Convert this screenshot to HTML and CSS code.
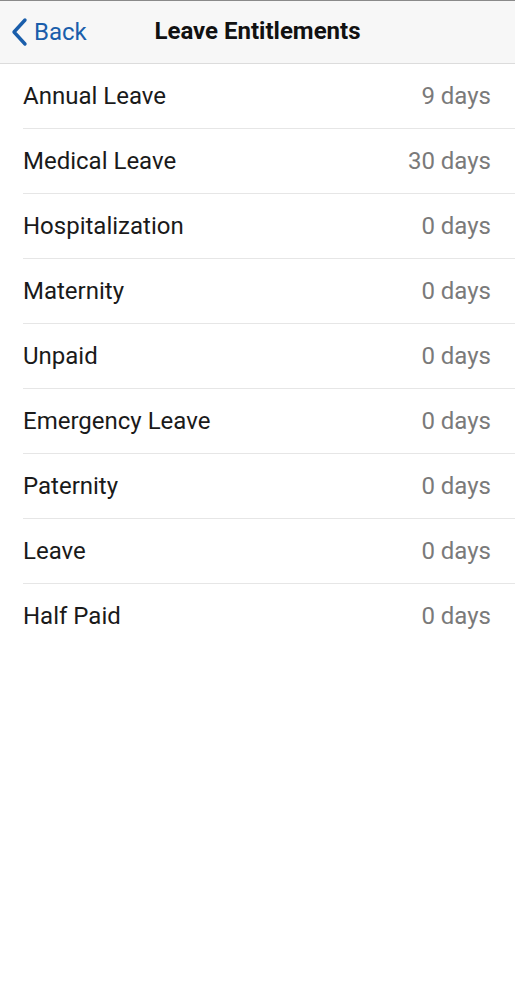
FILE: index.html
```html
<!DOCTYPE html>
<html lang="en">

<head>
    <meta charset="UTF-8">
    <meta name="viewport" content="width=device-width, initial-scale=1.0">
    <title>Leave Entitlements</title>
    <link rel="stylesheet" href="styles.css">
</head>

<body>
    <div class="header">
        <a class="back" href="#">
            <svg class="chevron" width="18" height="30" viewBox="0 0 18 30">
                <path d="M15 3 L4 15 L15 27" fill="none" stroke="#1a5eab" stroke-width="3.4" stroke-linecap="round" stroke-linejoin="round" />
            </svg>
            <span>Back</span>
        </a>
        <h1>Leave Entitlements</h1>
    </div>
    <ul class="list">
        <li><span class="name">Annual Leave</span><span class="value">9 days</span></li>
        <li><span class="name">Medical Leave</span><span class="value">30 days</span></li>
        <li><span class="name">Hospitalization</span><span class="value">0 days</span></li>
        <li><span class="name">Maternity</span><span class="value">0 days</span></li>
        <li><span class="name">Unpaid</span><span class="value">0 days</span></li>
        <li><span class="name">Emergency Leave</span><span class="value">0 days</span></li>
        <li><span class="name">Paternity</span><span class="value">0 days</span></li>
        <li><span class="name">Leave</span><span class="value">0 days</span></li>
        <li><span class="name">Half Paid</span><span class="value">0 days</span></li>
    </ul>
</body>

</html>
```

FILE: styles.css
```css
body {
    font-family: Roboto, 'Noto Sans', sans-serif;
    background: #fff;
    margin: 0;
    padding: 0;
    border-top: 1px solid #8a8a8a;
}

.header {
    position: relative;
    height: 62px;
    background-color: #f7f7f7;
    border-bottom: 1px solid #dcdcdc;
    display: flex;
    align-items: center;
    justify-content: center;
}

.back {
    position: absolute;
    left: 10px;
    top: 0;
    height: 61px;
    display: flex;
    align-items: center;
    gap: 6px;
    color: #1a5eab;
    text-decoration: none;
    font-size: 24px;
}

h1 {
    margin: 0 0 2px 0;
    font-size: 24px;
    font-weight: bold;
    color: #111;
}

.list {
    list-style: none;
    margin: 0;
    padding: 0 0 0 23px;
}

.list li {
    height: 64px;
    display: flex;
    align-items: center;
    justify-content: space-between;
    padding-right: 24px;
    border-bottom: 1px solid #e6e6e6;
    font-size: 24px;
}

.list li:last-child {
    border-bottom: none;
}

.name {
    color: #1a1a1a;
}

.value {
    color: #7a7a7a;
}
```
